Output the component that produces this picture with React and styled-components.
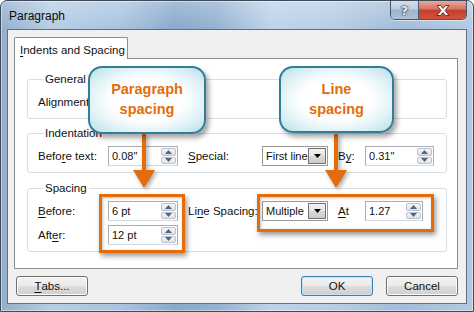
import React from "react";
import styled, { createGlobalStyle } from "styled-components";

const GlobalStyle = createGlobalStyle`
  html, body {
    margin: 0;
    padding: 0;
    background: #ffffff;
  }
  body {
    font-family: "Liberation Sans", Arial, sans-serif;
    font-size: 11.5px;
    color: #1a1a1a;
  }
`;

function Spinner() {
  return (
    <Spin>
      <SpinHalf>
        <svg width="7" height="4" viewBox="0 0 7 4">
          <path d="M0 4 L3.5 0 L7 4 Z" fill="#4f6787" />
        </svg>
      </SpinHalf>
      <SpinHalf>
        <svg width="7" height="4" viewBox="0 0 7 4">
          <path d="M0 0 L7 0 L3.5 4 Z" fill="#4f6787" />
        </svg>
      </SpinHalf>
    </Spin>
  );
}

function SpinBox({ value, width }) {
  return (
    <Field $w={width}>
      <FieldText>{value}</FieldText>
      <Spinner />
    </Field>
  );
}

function Combo({ value, width }) {
  return (
    <ComboBox $w={width}>
      <FieldText>{value}</FieldText>
      <ComboButton>
        <svg width="7" height="4" viewBox="0 0 7 4">
          <path d="M0 0 L7 0 L3.5 4 Z" fill="#000" />
        </svg>
      </ComboButton>
    </ComboBox>
  );
}

function Arrow({ x }) {
  // orange pointer going from a callout down to the highlighted box
  return (
    <ArrowSvg $x={x} width="24" height="56" viewBox="0 0 24 56">
      <rect x="10" y="0" width="4" height="38" fill="#e46c0a" />
      <path d="M1 36 L23 36 L12 54 Z" fill="#e46c0a" />
    </ArrowSvg>
  );
}

export default function App() {
  return (
    <>
      <GlobalStyle />
      <Window>
        <TitleBar>
          <Title>Paragraph</Title>
          <Caption>
            <HelpBtn>?</HelpBtn>
            <CloseBtn>
              <svg width="14" height="11" viewBox="0 0 14 11">
                <path
                  d="M1 0.5 L4.5 0.5 L7 3.5 L9.5 0.5 L13 0.5 L9 5.5 L13 10.5 L9.5 10.5 L7 7.5 L4.5 10.5 L1 10.5 L5 5.5 Z"
                  fill="#ffffff"
                  stroke="#5a2a24"
                  strokeWidth="0.9"
                />
              </svg>
            </CloseBtn>
          </Caption>
        </TitleBar>

        <Client>
          <TabStrip>
            <Tab>
              <Key>I</Key>ndents and Spacing
            </Tab>
          </TabStrip>
          <Panel>
            <Group>
              <Legend>General</Legend>
              <Row>
                <Label>Alignment:</Label>
              </Row>
            </Group>

            <Group $gap={7}>
              <Legend>Indentation</Legend>
              <Row>
                <Label>
                  Befo<Key>r</Key>e text:
                </Label>
                <SpinBox value={'0.08"'} width={70} />
                <Label>
                  <Key>S</Key>pecial:
                </Label>
                <Combo value="First line" width={66} />
                <Label>
                  B<Key>y</Key>:
                </Label>
                <SpinBox value={'0.31"'} width={69} />
              </Row>
            </Group>

            <Group $gap={8}>
              <Legend>Spacing</Legend>
              <Rows>
                <Row>
                  <Label>
                    <Key>B</Key>efore:
                  </Label>
                  <SpinBox value="6 pt" width={70} />
                  <Label>
                    Li<Key>n</Key>e Spacing:
                  </Label>
                  <Combo value="Multiple" width={66} />
                  <Label>
                    <Key>A</Key>t
                  </Label>
                  <SpinBox value="1.27" width={58} />
                </Row>
                <Row>
                  <Label>
                    Aft<Key>e</Key>r:
                  </Label>
                  <SpinBox value="12 pt" width={70} />
                </Row>
              </Rows>
            </Group>
          </Panel>

          <Footer>
            <Button>
              <Key>T</Key>abs...
            </Button>
            <RightButtons>
              <Button $primary>OK</Button>
              <Button>Cancel</Button>
            </RightButtons>
          </Footer>
        </Client>

        <Highlight $x={98} $y={193} $w={86} $h={59} />
        <Highlight $x={256} $y={193} $w={177} $h={38} />

        <Arrow x={131} />
        <Arrow x={323} />

        <Callout $x={87} $y={65} $w={118} $h={68}>
          Paragraph
          <br />
          spacing
        </Callout>
        <Callout $x={278} $y={65} $w={115} $h={67}>
          Line
          <br />
          spacing
        </Callout>
      </Window>
    </>
  );
}

const Window = styled.div`
  position: relative;
  box-sizing: border-box;
  width: 474px;
  height: 312px;
  padding: 0 6px 7px 6px;
  border: 1px solid #3d4b5b;
  border-radius: 7px 7px 0 0;
  display: flex;
  flex-direction: column;
  overflow: hidden;
  background:
    linear-gradient(to bottom, rgba(255, 255, 255, 0.25), rgba(255, 255, 255, 0) 28px),
    linear-gradient(
      to right,
      #94afcb 0px,
      #b6cde5 50px,
      #a9c4df 120px,
      #88a9cb 175px,
      #93b2d1 215px,
      #bed3e9 270px,
      #b8cee5 330px,
      #a2bdd9 400px,
      #b3cae2 474px
    );
  box-shadow: inset 0 0 0 1px rgba(255, 255, 255, 0.45);
`;

const TitleBar = styled.div`
  display: flex;
  align-items: flex-start;
  height: 28px;
  flex-shrink: 0;
`;

const Title = styled.div`
  padding: 8px 0 0 2px;
  font-size: 12px;
  line-height: 14px;
  color: #0b0b0b;
`;

const Caption = styled.div`
  display: flex;
  margin-left: auto;
  height: 18px;
  border: 1px solid #47576a;
  border-top: none;
  border-radius: 0 0 5px 5px;
  overflow: hidden;
  box-shadow: 0 1px 0 rgba(255, 255, 255, 0.5);
`;

const HelpBtn = styled.div`
  width: 27px;
  display: flex;
  align-items: center;
  justify-content: center;
  font-family: "DejaVu Sans", sans-serif;
  font-weight: bold;
  font-size: 13px;
  color: #e8ecf0;
  text-shadow: 0 0 1px #2c3a4a, 0 0 1px #2c3a4a, 0 0 2px #2c3a4a;
  background: linear-gradient(to bottom, #d3dfeb 0%, #bccddf 45%, #9db4cb 50%, #adc2d7 100%);
  border-right: 1px solid #4a5a6c;
`;

const CloseBtn = styled.div`
  width: 47px;
  display: flex;
  align-items: center;
  justify-content: center;
  background: linear-gradient(to bottom, #e9a99c 0%, #d8705f 45%, #c4402c 52%, #d0533b 100%);
`;

const Client = styled.div`
  box-sizing: border-box;
  flex: 1;
  background: #f0f0f0;
  border: 1px solid #5d7085;
  padding: 7px 8px 0 6px;
  display: flex;
  flex-direction: column;
`;

const TabStrip = styled.div`
  display: flex;
  height: 21px;
`;

const Tab = styled.div`
  position: relative;
  z-index: 1;
  box-sizing: border-box;
  height: 22px;
  width: 114px;
  padding: 5px 0 0 5px;
  line-height: 14px;
  white-space: nowrap;
  font-size: 11.5px;
  background: #ffffff;
  border: 1px solid #898c95;
  border-bottom: none;
  border-radius: 2px 2px 0 0;
  color: #111;
`;

const Panel = styled.div`
  box-sizing: border-box;
  height: 211px;
  background: #ffffff;
  border: 1px solid #898c95;
  padding: 13px 10px 0 12px;
`;

const Group = styled.fieldset`
  margin: ${(p) => p.$gap || 0}px 0 0 0;
  padding: 6px 0 6px 10px;
  border: 1px solid #d5dfe5;
  border-radius: 3px;
  min-width: 0;
`;

const Legend = styled.legend`
  padding: 0 2px;
  margin-left: 5px;
  line-height: 14px;
  font-size: 11.5px;
  color: #111;
`;

const Rows = styled.div`
  display: flex;
  flex-direction: column;
  gap: 4px;
`;

const Row = styled.div`
  display: grid;
  grid-template-columns: 70px 80px 74px 76px 27px auto;
  align-items: center;
  height: 20px;
`;

const Label = styled.div`
  font-size: 11.5px;
  line-height: 14px;
  color: #111;
  white-space: nowrap;
`;

const Key = styled.span`
  text-decoration: underline;
  text-underline-offset: 2px;
`;

const Field = styled.div`
  box-sizing: border-box;
  width: ${(p) => p.$w}px;
  height: 20px;
  display: flex;
  align-items: stretch;
  background: #ffffff;
  border: 1px solid #abadb3;
  border-bottom-color: #d5d8de;
  padding: 1px;
`;

const FieldText = styled.div`
  flex: 1;
  display: flex;
  align-items: center;
  padding-left: 2px;
  font-size: 11px;
  color: #111;
  white-space: nowrap;
  overflow: hidden;
`;

const Spin = styled.div`
  width: 15px;
  display: flex;
  flex-direction: column;
  gap: 1px;
`;

const SpinHalf = styled.div`
  flex: 1;
  display: flex;
  align-items: center;
  justify-content: center;
  background: linear-gradient(to bottom, #f6f6f6, #e0e3e7);
  border: 1px solid #bcc2c9;
  border-radius: 2px;
`;

const ComboBox = styled(Field)`
  border: 1px solid #9a9a9a;
  padding: 1px;
`;

const ComboButton = styled.div`
  box-sizing: border-box;
  width: 18px;
  display: flex;
  align-items: center;
  justify-content: center;
  background: linear-gradient(to bottom, #f2f2f2 0%, #e6e6e6 50%, #d8d8d8 51%, #cccccc 100%);
  border: 1px solid #707070;
`;

const Footer = styled.div`
  display: flex;
  align-items: center;
  margin-top: 7px;
  padding-left: 2px;
`;

const RightButtons = styled.div`
  display: flex;
  gap: 13px;
  margin-left: auto;
`;

const Button = styled.div`
  box-sizing: border-box;
  width: 72px;
  height: 20px;
  display: flex;
  align-items: center;
  justify-content: center;
  font-size: 11.5px;
  color: #111;
  border: 1px solid ${(p) => (p.$primary ? "#3c7fb1" : "#707070")};
  border-radius: 3px;
  background: linear-gradient(to bottom, #f2f2f2 0%, #ebebeb 50%, #dddddd 51%, #cfcfcf 100%);
  box-shadow: inset 0 0 0 1px ${(p) => (p.$primary ? "#bfe6f8" : "#fbfbfb")};
`;

const Highlight = styled.div`
  position: absolute;
  left: ${(p) => p.$x}px;
  top: ${(p) => p.$y}px;
  width: ${(p) => p.$w}px;
  height: ${(p) => p.$h}px;
  box-sizing: border-box;
  border: 3px solid #e46c0a;
  box-shadow: 2px 3px 5px rgba(0, 0, 0, 0.4), inset 1px 1px 3px rgba(0, 0, 0, 0.25);
`;

const ArrowSvg = styled.svg`
  position: absolute;
  left: ${(p) => p.$x}px;
  top: 133px;
  filter: drop-shadow(2px 2px 2px rgba(0, 0, 0, 0.35));
`;

const Callout = styled.div`
  position: absolute;
  left: ${(p) => p.$x}px;
  top: ${(p) => p.$y}px;
  width: ${(p) => p.$w}px;
  height: ${(p) => p.$h}px;
  box-sizing: border-box;
  display: flex;
  align-items: center;
  justify-content: center;
  text-align: center;
  border: 2px solid #2f7f98;
  border-radius: 14px;
  background: radial-gradient(
    ellipse at center,
    #ffffff 0%,
    #ffffff 45%,
    #e3f3f7 70%,
    #b7dfe9 100%
  );
  box-shadow: 3px 4px 5px rgba(0, 0, 0, 0.35);
  font-family: "Liberation Sans", Arial, sans-serif;
  font-weight: bold;
  font-size: 14.5px;
  line-height: 20px;
  color: #e46c0a;
  padding-bottom: 2px;
`;
